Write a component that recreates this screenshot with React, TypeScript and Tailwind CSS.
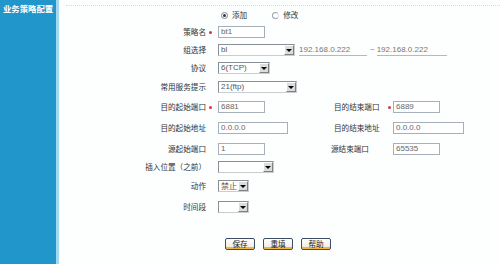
import React from 'react';

const cn = '"Noto Sans CJK SC", "Liberation Sans", sans-serif';

const Star = () => <span className="block w-[3px] h-[3px] rounded-full bg-[#e0303c]" />;

const TextBox = ({ w, value }: { w: string; value: string }) => (
    <div className={`${w} h-[12px] border border-[#a7b0b9] bg-white flex items-center pl-[2px] text-[8px] text-[#666] font-['Liberation_Sans']`}>
        {value}
    </div>
);

const Select = ({ w, value, cjk }: { w: string; value: string; cjk?: boolean }) => (
    <div className={`${w} h-[12px] border border-[#8a8f96] border-r-[#c9ccd1] border-b-[#c9ccd1] bg-white flex items-center justify-between`}>
        <span className={`pl-[2px] text-[8px] text-[#555] leading-none ${cjk ? "font-['Noto_Sans_CJK_SC']" : "font-['Liberation_Sans']"}`}>{value}</span>
        <span className="w-[10px] h-[10px] bg-[#dcdcdc] border border-t-white border-l-white border-r-[#808080] border-b-[#808080] flex items-center justify-center">
            <span className="w-0 h-0 border-l-[3px] border-r-[3px] border-t-[3px] border-l-transparent border-r-transparent border-t-black" />
        </span>
    </div>
);

const Label = ({ text, star }: { text: string; star?: boolean }) => (
    <>
        <div className="w-[147px] text-right text-[7.6px] text-[#333] leading-none">{text}</div>
        <div className="w-[12px] flex items-center pl-[3px]">{star && <Star />}</div>
    </>
);

const Row = ({ h, children }: { h: string; children: React.ReactNode }) => (
    <div className={`${h} flex items-center`}>{children}</div>
);

const Btn = ({ text }: { text: string }) => (
    <button className="w-[30px] h-[12px] rounded-[2px] border border-[#3d4d66] bg-[linear-gradient(#ffffff,#ece9e0)] shadow-[inset_0_-2px_0_#f0b440] text-[7.6px] text-[#222] leading-none flex items-center justify-center">
        {text}
    </button>
);

export default function App() {
    return (
        <div className="flex w-[500px] h-[264px] bg-[#fdfefe]" style={{ fontFamily: cn }}>
            <div className="w-[56px] bg-[#2196ca] pt-[4px] pl-[3px]">
                <div className="text-white font-bold text-[8.4px] leading-none whitespace-nowrap">业务策略配置</div>
            </div>
            <div className="w-[3px] bg-[#a3d9ef]" />
            <div className="flex-1 flex flex-col">
                <div className="mt-[5px] ml-[7px] h-px border-t border-dotted border-[#d3dce2]" />

                <Row h="h-[18px]">
                    <div className="w-[162px]" />
                    <span className="w-[7px] h-[7px] rounded-full border border-[#7d8691] bg-white flex items-center justify-center">
                        <span className="w-[3px] h-[3px] rounded-full bg-[#333]" />
                    </span>
                    <span className="ml-[4px] text-[7.6px] text-[#333] leading-none">添加</span>
                    <span className="ml-[25px] w-[7px] h-[7px] rounded-full border border-[#9aa3ad] border-r-[#e2e5e8] bg-white" />
                    <span className="ml-[4px] text-[7.6px] text-[#333] leading-none">修改</span>
                </Row>

                <Row h="h-[16px]">
                    <Label text="策略名" star />
                    <TextBox w="w-[47px]" value="bt1" />
                </Row>

                <Row h="h-[20px]">
                    <Label text="组选择" />
                    <Select w="w-[77px]" value="bl" />
                    <div className="ml-[4px] w-[68px] h-[12px] border-b border-[#b5b9be] text-[8px] text-[#777] font-['Liberation_Sans'] leading-[11px]">192.168.0.222</div>
                    <span className="ml-[3px] text-[8px] text-[#777] font-['Liberation_Sans']">~</span>
                    <div className="ml-[2px] w-[70px] h-[12px] border-b border-[#b5b9be] text-[8px] text-[#777] font-['Liberation_Sans'] leading-[11px]">192.168.0.222</div>
                </Row>

                <Row h="h-[16px]">
                    <Label text="协议" />
                    <Select w="w-[52px]" value="6(TCP)" />
                </Row>

                <Row h="h-[22px]">
                    <Label text="常用服务提示" />
                    <Select w="w-[79px]" value="21(ftp)" />
                </Row>

                <Row h="h-[18px]">
                    <Label text="目的起始端口" star />
                    <TextBox w="w-[47px]" value="6881" />
                    <div className="w-[66px]" />
                    <div className="w-[59px] pl-[3px] text-[7.6px] text-[#333] leading-none">目的结束端口</div>
                    <div className="w-[3px] -ml-[2px] mr-[2px] flex items-center"><Star /></div>
                    <TextBox w="w-[47px]" value="6889" />
                </Row>

                <Row h="h-[24px]">
                    <Label text="目的起始地址" />
                    <TextBox w="w-[70px]" value="0.0.0.0" />
                    <div className="w-[43px]" />
                    <div className="w-[62px] pl-[3px] text-[7.6px] text-[#333] leading-none">目的结束地址</div>
                    <TextBox w="w-[71px]" value="0.0.0.0" />
                </Row>

                <Row h="h-[18px]">
                    <Label text="源起始端口" />
                    <TextBox w="w-[47px]" value="1" />
                    <div className="w-[66px]" />
                    <div className="w-[62px] text-[7.6px] text-[#333] leading-none">源结束端口</div>
                    <TextBox w="w-[47px]" value="65535" />
                </Row>

                <Row h="h-[18px]">
                    <Label text="插入位置（之前）" />
                    <Select w="w-[56px]" value="" />
                </Row>

                <Row h="h-[20px]">
                    <Label text="动作" />
                    <Select w="w-[31px]" value="禁止" cjk />
                </Row>

                <Row h="h-[22px]">
                    <Label text="时间段" />
                    <Select w="w-[31px]" value="" />
                </Row>

                <div className="h-[18px]" />
                <div className="h-[16px] flex items-center gap-[8px] pl-[166px]">
                    <Btn text="保存" />
                    <Btn text="重填" />
                    <Btn text="帮助" />
                </div>
            </div>
        </div>
    );
}
